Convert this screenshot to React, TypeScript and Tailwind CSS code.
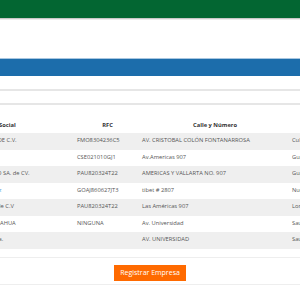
import React from "react";

const rows = [
  { rs: "COMERCIALIZADORA FM S.A. DE C.V.", rfc: "FMO8304236C5", calle: "AV. CRISTOBAL COLÓN FONTANARROSA", col: "Culiacán", link: false },
  { rs: "", rfc: "CSE021010GJ1", calle: "Av.Americas 907", col: "Guadalajara", link: false },
  { rs: "SERVICIOS INTEGRALES PAULO SA. de CV.", rfc: "PAU820324T22", calle: "AMERICAS Y VALLARTA NO. 907", col: "Guadalajara", link: false },
  { rs: "Josué Gómez Alvarado Jiménez", rfc: "GOAJ860627JT3", calle: "tibet # 2807", col: "Nueva Era", link: true },
  { rs: "Servicio Integrales Paulo S.A. de C.V", rfc: "PAU820324T22", calle: "Las Américas 907", col: "Lomas", link: false },
  { rs: "UNIVERSIDAD TECH DE CHIHUAHUA", rfc: "NINGUNA", calle: "Av. Universidad", col: "Sauz", link: false },
  { rs: "Grupos Industrial del Norte S.a.", rfc: "", calle: "AV. UNIVERSIDAD", col: "Sauz", link: false },
];

export default function App() {
  return (
    <div
      className="w-[300px] h-[300px] overflow-hidden bg-white text-[#555]"
      style={{ fontFamily: '"Open Sans", "Liberation Sans", sans-serif' }}
    >
      <div className="h-[18px] bg-[#036632]" />
      <div className="h-[1px] bg-[#c8c8c8]" />
      <div className="h-[1px] bg-[#ececec]" />
      <div className="h-[38px]" />
      <div className="h-[1px] bg-[#a8c6e0]" />
      <div className="h-[17px] bg-[#1c6dab]" />
      <div className="h-[13px]" />
      <div className="h-[2px] bg-[#e6e6e6]" />
      <div className="h-[12px]" />
      <div className="h-[2px] bg-[#e6e6e6]" />
      <div className="h-[14px]" />
      <div className="ml-[-83px] w-[480px] text-[5.75px] leading-none">
        <div className="flex h-[14px] items-center font-bold text-[#333]">
          <div className="w-[158px] pl-[4px] text-center">Razón Social</div>
          <div className="w-[65px] text-center">RFC</div>
          <div className="w-[150px] text-center">Calle y Número</div>
          <div className="w-[100px] text-center">Colonia</div>
        </div>
        {rows.map((r, i) => (
          <div
            key={i}
            className={`flex h-[16.5px] items-center ${i % 2 === 0 ? "bg-[#efefef]" : "bg-white"}`}
          >
            <div className={`w-[158px] pl-[2px] whitespace-nowrap ${r.link ? "text-[#3b8fd9]" : ""}`}>{r.rs}</div>
            <div className="w-[65px] pl-[2px] whitespace-nowrap">{r.rfc}</div>
            <div className="w-[150px] pl-[2px] whitespace-nowrap">{r.calle}</div>
            <div className="w-[100px] pl-[2px] whitespace-nowrap">{r.col}</div>
          </div>
        ))}
      </div>
      <div className="h-[8px]" />
      <div className="h-[1px] bg-[#eeeeee]" />
      <div className="h-[7px]" />
      <div className="flex justify-center">
        <button className="h-[16px] w-[72px] bg-[#ff6a00] text-white text-[7px] leading-none">
          Registrar Empresa
        </button>
      </div>
      <div className="h-[3px]" />
      <div className="h-[1px] bg-[#eeeeee]" />
    </div>
  );
}
